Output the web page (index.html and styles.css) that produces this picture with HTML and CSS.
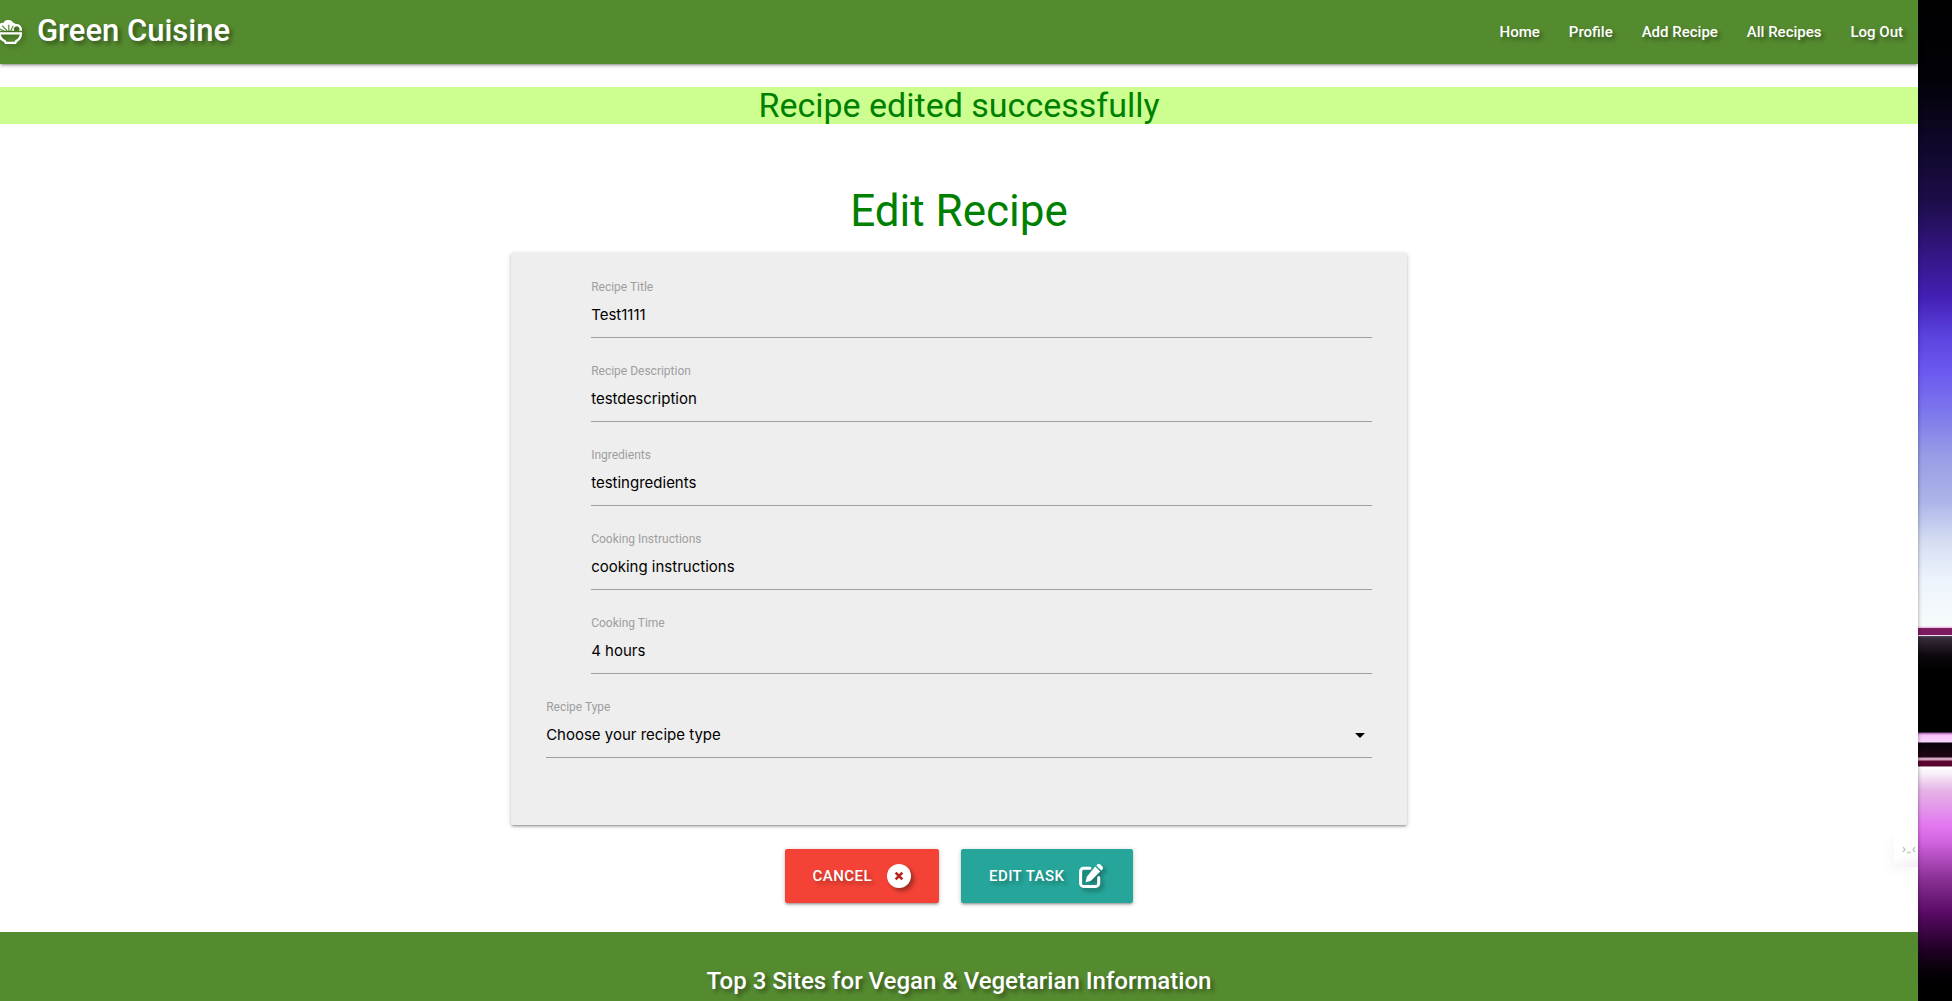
FILE: index.html
```html
<!DOCTYPE html>
<html lang="en">
<head>
<meta charset="utf-8">
<meta name="viewport" content="width=device-width, initial-scale=1">
<title>Green Cuisine - Edit Recipe</title>
<link rel="stylesheet" href="styles.css">
</head>
<body>
<div class="page">
  <header class="navbar">
    <a class="brand" href="#">
      <svg class="brand-icon" viewBox="0 0 24 24" aria-hidden="true">
        <path fill="currentColor" d="M0 10.800V5.600A3.500 3.500 0 0 1 4.500 3 4.500 4.500 0 0 1 9 0a4.500 4.500 0 0 1 5 2.600A3.500 3.500 0 0 1 16.500 4a5.500 5.500 0 0 1 6.500 5.400l-.3 1.400h-2.600a2.900 2.900 0 1 0-4.800 0z"/>
        <path stroke="#558b2f" stroke-width="1.200" fill="none" d="M9.800 11V4.800M8.300 11 3 5.600M5 11 1 9M11.600 11l2.600-5"/>
        <path fill="currentColor" fill-rule="evenodd" d="M-1 12.200h24v1.600c0 4-2.200 6.500-5 8.200l-1 2H6l-1-2c-3.500-1.700-6-4.200-6-8.200zM1.600 14.600c.4 2.700 2.600 4.600 5 5.600l.9 1.600h8l.9-1.600c2.400-1 4-2.900 4.400-5.600z"/>
      </svg>
      <span>Green Cuisine</span>
    </a>
    <nav class="nav-links" aria-label="Main">
      <a href="#">Home</a>
      <a href="#">Profile</a>
      <a href="#">Add Recipe</a>
      <a href="#">All Recipes</a>
      <a href="#">Log Out</a>
    </nav>
  </header>

  <main>
    <h4 class="flash" role="status">Recipe edited successfully</h4>
    <h3 class="title">Edit Recipe</h3>
    <form class="recipe-form">
      <div class="card">
        <div class="field">
          <label for="title">Recipe Title</label>
          <input id="title" type="text" value="Test1111">
        </div>
        <div class="field">
          <label for="description">Recipe Description</label>
          <input id="description" type="text" value="testdescription">
        </div>
        <div class="field">
          <label for="ingredients">Ingredients</label>
          <input id="ingredients" type="text" value="testingredients">
        </div>
        <div class="field">
          <label for="instructions">Cooking Instructions</label>
          <input id="instructions" type="text" value="cooking instructions">
        </div>
        <div class="field">
          <label for="time">Cooking Time</label>
          <input id="time" type="text" value="4 hours">
        </div>
        <div class="field field-wide">
          <label for="type">Recipe Type</label>
          <div class="select-wrap">
            <select id="type">
              <option>Choose your recipe type</option>
            </select>
            <svg class="caret" viewBox="0 0 24 24" aria-hidden="true"><path d="M7 10l5 5 5-5z"/></svg>
          </div>
        </div>
      </div>
      <div class="actions">
        <button class="btn btn-cancel" type="button">Cancel
          <svg class="btn-icon" viewBox="0 0 512 512" aria-hidden="true">
            <circle cx="256" cy="256" r="256" fill="currentColor"/>
            <path d="M184 184l144 144M328 184 184 328" stroke="#b3261e" stroke-width="56" fill="none"/>
          </svg>
        </button>
        <button class="btn btn-save" type="submit">Edit Task
          <svg class="btn-icon btn-icon-edit" viewBox="0 0 26 24" aria-hidden="true">
            <path d="M11 4.300H4.600a3 3 0 0 0-3 3v12.100a3 3 0 0 0 3 3h12.100a3 3 0 0 0 3-3V13.500" fill="none" stroke="currentColor" stroke-width="3" stroke-linecap="round"/>
            <path d="M16.200 2.600l5 5L12 16.800l-5.500 1.500 1.400-5.600zM17.300 1.500l1-1a2.200 2.200 0 0 1 3 0l2.100 2.100a2.200 2.200 0 0 1 0 3l-1 1z" fill="currentColor"/>
          </svg>
        </button>
      </div>
    </form>
  </main>

  <footer class="footer">
    <h5>Top 3 Sites for Vegan &amp; Vegetarian Information</h5>
  </footer>

  <div class="ghost" aria-hidden="true">
    <svg viewBox="0 0 14 8"><path d="M1 1l2 2.500L1 6M13 1l-2 2.500L13 6M5 6.500h4" fill="none" stroke="#c8c8c8" stroke-width="1.500"/></svg>
  </div>
</div>
<div class="desktop" aria-hidden="true"></div>
</body>
</html>
```
FILE: styles.css
```css
* { box-sizing: border-box; }

body {
  margin: 0;
  display: grid;
  grid-template-columns: minmax(0, 1fr) 34px;
  height: 100vh;
  overflow: hidden;
  background: #fff;
  color: rgba(0, 0, 0, 0.87);
  font-family: Roboto, "Liberation Sans", sans-serif;
  font-size: 15px;
  line-height: 24px;
}

h3, h4, h5 { margin: 0; font-weight: 400; }

.page {
  position: relative;
  z-index: 1;
  display: flex;
  flex-direction: column;
  min-height: 100vh;
  background: #fff;
  box-shadow: 0 0 4px rgba(0, 0, 0, 0.4);
}

.navbar {
  display: flex;
  justify-content: space-between;
  align-items: center;
  flex: none;
  padding-right: 15px;
  background: #558b2f;
  box-shadow: 0 2px 2px rgba(0, 0, 0, 0.14), 0 3px 1px -2px rgba(0, 0, 0, 0.12), 0 1px 5px rgba(0, 0, 0, 0.2);
}

.navbar a {
  color: #fff;
  text-decoration: none;
  text-shadow: 3px 3px 4px rgba(0, 0, 0, 0.4);
}

.brand {
  display: flex;
  align-items: center;
  gap: 14px;
  margin-left: -1px;
  padding-bottom: 2px;
  font-size: 31px;
  font-weight: 500;
  line-height: 62px;
}

.brand-icon {
  width: 24px;
  height: 24px;
  margin-top: 2px;
  overflow: visible;
  filter: drop-shadow(3px 3px 2px rgba(0, 0, 0, 0.25));
}

.nav-links { display: flex; gap: 29px; font-weight: 500; }

.flash {
  margin-top: 23px;
  background: #ccff90;
  color: green;
  font-size: 34px;
  line-height: 37px;
  text-align: center;
}

.title {
  margin: 63px 0 17px;
  color: green;
  font-size: 44px;
  line-height: 49px;
  text-align: center;
}

.recipe-form { width: 46.7%; margin: 0 auto; }

.card {
  display: flex;
  flex-direction: column;
  padding: 25px 35px 67px;
  border-radius: 2px;
  background: #eee;
  box-shadow: 0 2px 2px rgba(0, 0, 0, 0.14), 0 3px 1px -2px rgba(0, 0, 0, 0.12), 0 1px 5px rgba(0, 0, 0, 0.2);
}

.field { height: 84px; margin-left: 45px; }
.field-wide { margin-left: 0; height: 60px; }

.field label {
  display: block;
  color: #9e9e9e;
  font-size: 12px;
  line-height: 18px;
}

.field input,
.field select {
  display: block;
  width: 100%;
  height: 42px;
  margin: 0;
  padding: 0 0 4px;
  border: 0;
  border-bottom: 1px solid #9e9e9e;
  border-radius: 0;
  outline: 0;
  background: transparent;
  color: #000;
  font-family: Inter, "Liberation Sans", sans-serif;
  font-size: 15px;
  appearance: none;
}

.select-wrap { position: relative; }

.caret {
  position: absolute;
  right: 0;
  top: 7px;
  width: 24px;
  height: 24px;
  pointer-events: none;
}

.actions {
  display: flex;
  justify-content: center;
  gap: 22px;
  padding: 24px 0 29px;
}

.btn {
  display: flex;
  align-items: center;
  gap: 15px;
  height: 54px;
  padding: 0 28px;
  border: 0;
  border-radius: 2px;
  color: #fff;
  font-family: inherit;
  font-size: 15px;
  font-weight: 500;
  letter-spacing: 0.03em;
  text-transform: uppercase;
  text-shadow: 3px 3px 4px rgba(0, 0, 0, 0.3);
  box-shadow: 0 2px 2px rgba(0, 0, 0, 0.14), 0 3px 1px -2px rgba(0, 0, 0, 0.12), 0 1px 5px rgba(0, 0, 0, 0.2);
}

.btn-cancel { background: #f44336; }
.btn-save { background: #26a69a; }

.btn-icon {
  width: 24px;
  height: 24px;
  overflow: visible;
  filter: drop-shadow(3px 3px 2px rgba(0, 0, 0, 0.35));
}

.btn-icon-edit { width: 26px; }

.footer {
  flex: 1 0 auto;
  padding: 36px 0 6px;
  background: #558b2f;
  color: #fff;
  text-align: center;
}

.footer h5 {
  font-size: 24px;
  font-weight: 500;
  line-height: 27px;
  text-shadow: 3px 3px 4px rgba(0, 0, 0, 0.4);
}

/* Faded assistant badge peeking in at the window's edge */
.ghost {
  position: absolute;
  right: 0;
  bottom: 134px;
  width: 24px;
  height: 33px;
  padding: 12px 0 0 8px;
  background: linear-gradient(160deg, #fff 60%, #f3ecf8);
  box-shadow: -4px 5px 10px rgba(0, 0, 0, 0.03);
}

.ghost svg { display: block; width: 14px; height: 8px; }

/* Desktop wallpaper showing beside the window */
.desktop {
  background: linear-gradient(to bottom,
    #000 0, #020108 80px, #0d0622 130px, #1c0d48 200px, #32157f 250px, #4320b4 297px,
    #5a42de 335px, #6b58ef 370px, #7b75ec 410px, #989ce6 455px, #abb3e8 500px,
    #d3dcf2 540px, #eef4fc 580px, #f6fbfc 626px,
    #efc4e4 627px, #efc4e4 628px, #7c1b62 628px, #7c1b62 635px, #f1d8ee 635px, #f1d8ee 636px,
    #55505a 636px, #382a3a 638px, #0d0910 655px, #000 670px, #000 732px,
    #a45cae 733px, #f7c0f8 735px, #f8d4fb 742px, #08020a 743px, #200514 757px,
    #d3a5c0 758px, #d3a5c0 760px, #5a0730 761px, #5a0730 766px,
    #fff 767px, #f7edf7 774px, #e6b4e6 790px, #e277f0 826px, #cf62dc 843px,
    #8b3197 878px, #560962 915px, #26022d 945px, #080009 970px, #000 985px);
}
```
